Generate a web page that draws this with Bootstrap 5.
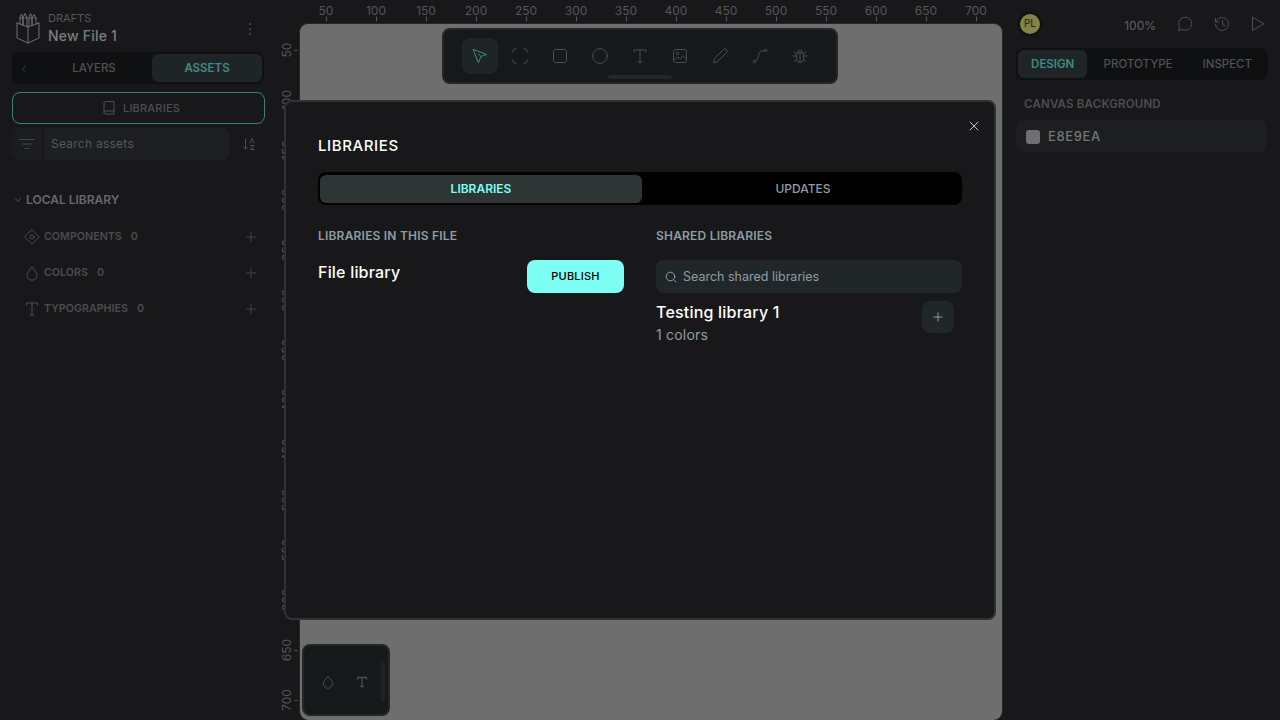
<!DOCTYPE html>
<html lang="en">
  <head>
    <meta charset="UTF-8" />
    <title>New File 1 - Libraries</title>
    <meta name="viewport" content="width=device-width, initial-scale=1" />
    <link href="https://cdn.jsdelivr.net/npm/bootstrap@5.3.0/dist/css/bootstrap.min.css" rel="stylesheet" />
    <style>
      html, body { height: 100%; overflow: hidden; }
      body { background: #18181a; font-family: Inter, "Noto Sans", sans-serif; font-size: 12px; color: #6a6c70; }
      svg { display: block; fill: none; stroke: currentColor; stroke-width: 1; stroke-linecap: round; stroke-linejoin: round; flex: none; }
      .app-shell { width: 1280px; height: 720px; }
      .side-left { width: 276px; flex: none; }
      .side-right { width: 276px; flex: none; padding-left: 12px; padding-right: 12px; }

      .file-head { height: 52px; padding: 12px 16px 0 16px; }
      .file-logo { color: #6c6e72; margin-right: 8px; }
      .file-team { font-size: 11px; line-height: 12px; color: #55575b; }
      .file-name { font-size: 14px; line-height: 16px; margin-top: 4px; color: #7c7e82; font-weight: 500; letter-spacing: .2px; }
      .kebab { color: #4b4d51; stroke-width: 2; margin-left: auto; margin-top: 10px; margin-right: 8px; }

      .seg-tabs { height: 32px; background: #0f1011; border-radius: 8px; padding: 2px; font-size: 11.5px; font-weight: 500; color: #4f5155; }
      .seg-tab { display: flex; align-items: center; justify-content: center; height: 28px; border-radius: 6px; }
      .left-tabs .seg-tab, .right-tabs .seg-tab { padding-top: 2px; }
      .seg-on { background: #1f2526; color: #3f8b83; font-weight: 600; }
      .left-tabs { margin: 0 12px; }
      .back-tab { width: 20px; color: #3b3d40; }
      .layers-tab { width: 118px; padding-left: 2px; }
      .assets-tab { width: 110px; }

      .lib-btn { margin: 8px 11px 0 12px; width: 253px; height: 32px; border: 1px solid #3c8178; border-radius: 8px; padding: 0 0 0 6px; color: #4c4e52; font-weight: 500; font-size: 11px; letter-spacing: .2px; }
      .lib-btn:hover { border-color: #3c8178; color: #4c4e52; }
      .asset-search { margin: 4px 12px 0; height: 32px; }
      .filter-box { width: 30px; height: 32px; background: #1b1c1f; border-radius: 8px 0 0 8px; color: #45474b; margin-right: 2px; }
      .asset-input { width: 186px; height: 32px; background: #1d1f22; border-radius: 0 8px 8px 0; padding-left: 7px; color: #55575b; font-size: 12px; letter-spacing: .25px; }
      .sort-icon { color: #4b4d51; margin-left: 12px; }

      .lib-title { margin: 32px 0 0 14px; height: 16px; font-weight: 600; font-size: 12px; color: #66686c; }
      .lib-title svg { margin-right: 4px; color: #4a4c50; }
      .lib-row { height: 36px; padding: 0 19px 0 24px; font-size: 10.7px; font-weight: 600; color: #4a4c50; }
      .lib-row .row-icon { width: 16px; margin-right: 4px; color: #4a4c50; }
      .lib-row .row-count { margin-left: 9px; }
      .lib-row .row-plus { margin-left: auto; margin-top: -1px; color: #3e4044; }
      .first-row { margin-top: 11px; }

      .center-col { width: 728px; flex: none; }
      .ruler-top { height: 24px; }
      .ruler-left { width: 24px; flex: none; }
      .ruler-txt { font-family: Inter, sans-serif; font-size: 12px; fill: #54565a; stroke: none; text-anchor: middle; }
      .ruler-tick { stroke: #54565a; }
      .canvas-area { position: relative; width: 704px; height: 697px; background: #6e6e6f; border: 1px solid #23282a; border-bottom: 0; border-radius: 9px; margin: -1px 0 0 -1px; }

      .float-bar { position: absolute; background: #17181a; border: 2px solid #23282a; border-radius: 8px; }
      .tool-bar { left: 142px; top: 4px; width: 396px; height: 56px; padding: 8px 16px 0; color: #4b4d51; }
      .tool-btn { width: 40px; height: 36px; display: flex; align-items: center; justify-content: center; border-radius: 8px; }
      .tool-on { background: #1f2526; color: #3f8b83; width: 36px; margin: 0 2px; }
      .bar-grip { position: absolute; left: 164px; bottom: 3px; width: 64px; height: 4px; background: #232527; border-radius: 2px; }
      .palette-bar { left: 2px; top: 620px; width: 88px; height: 72px; color: #4b4d51; padding-left: 16px; gap: 18px; }
      .palette-bar svg { margin-top: 4px; }
      .palette-grip { position: absolute; right: 3px; top: 16px; width: 4px; height: 40px; background: #202224; border-radius: 2px; }

      .top-right { height: 48px; color: #4f5155; }
      .pl-avatar { width: 24px; height: 24px; border-radius: 50%; background: #84844a; border: 2px solid #0f1011; color: #2c2d1c; font-size: 10px; font-weight: 500; margin-left: 2px; margin-top: -1px; }
      .zoom-val { font-size: 12px; color: #5f6165; margin-left: auto; margin-top: 3px; margin-right: 21px; }
      .tr-icon { margin-right: 21px; margin-top: -1px; }
      .tr-icon:last-child { margin-right: 3px; }
      .right-tabs { width: 252px; }
      .proto-tab { width: 102px; }
      .inspect-tab { width: 78px; }
      .design-tab { width: 70px; }
      .bg-label { margin: 16px 0 0 8px; font-weight: 600; font-size: 11.5px; line-height: 16px; color: #4c4e52; letter-spacing: .2px; }
      .bg-row { margin-top: 8px; width: 251px; height: 32px; background: #1c1e20; border-radius: 8px; padding: 1px 0 0 10px; font-size: 13px; color: #747679; font-weight: 500; letter-spacing: .6px; }
      .bg-swatch { width: 14px; height: 14px; background: #6f6f72; border-radius: 3px; margin-right: 8px; }

      .lib-dialog { width: 712px; max-width: 712px; margin: 100px auto 0; }
      .lib-modal { height: 520px; background: #18181a; border: 2px solid #2d3335; border-radius: 8px; padding: 32px; color: #fff; }
      .lib-modal-title { font-size: 15px; line-height: 24px; font-weight: 450; color: #fff; letter-spacing: .6px; margin: 0; }
      .close-x { position: absolute; right: 14px; top: 18px; color: #c4c6c8; background: none; border: 0; padding: 0; }
      .modal-tabs { margin-top: 14px; height: 33px; background: #000; border-radius: 8px; padding: 3px 0 2px 2px; font-size: 12px; font-weight: 500; color: #8f9da3; }
      .modal-tabs .seg-tab { width: 322px; flex: none; }
      .modal-tabs .seg-on { background: #2e3535; color: #7efff5; font-weight: 600; }
      .lib-cols { margin-top: 23px; gap: 32px; }
      .lib-col { width: 306px; }
      .col-head { font-size: 12px; line-height: 16px; font-weight: 600; color: #8f9da3; letter-spacing: .2px; }
      .col-body { margin-top: 16px; }
      .lib-name { font-size: 16px; line-height: 24px; font-weight: 450; color: #fff; letter-spacing: .2px; }
      .publish-btn { width: 97px; height: 33px; background: #7efff5; border: 0; border-radius: 8px; color: #000; font-size: 11px; font-weight: 500; letter-spacing: .2px; padding: 0; }
      .publish-btn:hover { background: #7efff5; color: #000; }
      .shared-search { height: 33px; background: #212729; border-radius: 8px; padding-left: 9px; padding-top: 1px; font-size: 12.5px; color: #8f9da3; }
      .shared-search svg { margin-right: 6px; margin-top: -1px; }
      .shared-item { margin-top: 7px; }
      .shared-count { font-size: 14px; line-height: 21px; color: #8f9da3; letter-spacing: .2px; }
      .add-btn { width: 32px; height: 32px; margin: 1px 8px 0 0; background: #212729; border-radius: 8px; color: #8f9da3; }
    </style>
  </head>
  <body>
    <div class="app-shell d-flex">
      <!-- panel lewy -->
      <aside class="side-left">
        <div class="file-head d-flex">
          <svg class="file-logo" width="24" height="32" viewBox="0 0 24 32">
            <path d="M1 11 12 15 23 11M1 11V26L12 31 23 26V11M12 15V31" />
            <path d="M4 12V5L5.500 2 7 5V13M7 13V6L9 1.500 11 6V14.500M13 14.500V5L14.500 1.500 16 5V13.500M16 13V6L18 2.500 20 6V12" />
            <path d="M4 6H7M9 6H11M13 6H16M18 6H20" />
          </svg>
          <div>
            <div class="file-team">DRAFTS</div>
            <div class="file-name">New File 1</div>
          </div>
          <svg class="kebab" width="4" height="14" viewBox="0 0 4 14">
            <path d="M2 2h.01M2 7h.01M2 12h.01" />
          </svg>
        </div>
        <div class="seg-tabs left-tabs d-flex">
          <div class="seg-tab back-tab">
            <svg width="8" height="10" viewBox="0 0 8 10"><path d="M5.500 2 2.500 5 5.500 8" /></svg>
          </div>
          <div class="seg-tab layers-tab">LAYERS</div>
          <div class="seg-tab seg-on assets-tab">ASSETS</div>
        </div>
        <button type="button" class="btn lib-btn d-flex align-items-center justify-content-center gap-2">
          <svg width="12" height="14" viewBox="0 0 12 14"><path d="M1 11.500V2a1.500 1.500 0 0 1 1.500-1.500H11V13H2.500A1.500 1.500 0 0 1 1 11.500a1.500 1.500 0 0 1 1.500-1.500H11" /></svg>
          LIBRARIES
        </button>
        <div class="asset-search d-flex align-items-center">
          <div class="filter-box d-flex align-items-center justify-content-center">
            <svg width="16" height="12" viewBox="0 0 16 12"><path d="M1 1.500H15M3.500 6H12.500M6 10.500H10" /></svg>
          </div>
          <div class="asset-input d-flex align-items-center">Search assets</div>
          <svg class="sort-icon" width="14" height="14" viewBox="0 0 14 14"><path d="M3.500 2V12M1.500 10 3.500 12 5.500 10M8 6 10 1.500 12 6M8.500 8.500H12L8.500 12.500H12" /></svg>
        </div>
        <div class="lib-title d-flex align-items-center">
          <svg width="8" height="8" viewBox="0 0 8 8"><path d="M1.500 2.500 4 5.500 6.500 2.500" /></svg>
          LOCAL LIBRARY
        </div>
        <div class="lib-row first-row d-flex align-items-center">
          <svg class="row-icon" width="16" height="16" viewBox="0 0 16 16"><path d="M8 .8 15.200 8 8 15.200 .8 8Z" /><circle cx="8" cy="8" r="2" /></svg>
          COMPONENTS <span class="row-count">0</span>
          <svg class="row-plus" width="12" height="12" viewBox="0 0 12 12"><path d="M6 1V11M1 6H11" /></svg>
        </div>
        <div class="lib-row d-flex align-items-center">
          <svg class="row-icon" width="16" height="16" viewBox="0 0 16 16"><path d="M8 1.500 11.800 6.500A5 5 0 1 1 4.200 6.500Z" transform="translate(0 .5)" /></svg>
          COLORS <span class="row-count">0</span>
          <svg class="row-plus" width="12" height="12" viewBox="0 0 12 12"><path d="M6 1V11M1 6H11" /></svg>
        </div>
        <div class="lib-row d-flex align-items-center">
          <svg class="row-icon" width="16" height="16" viewBox="0 0 16 16"><path d="M2.500 4V2H13.500V4M8 2V14M6 14H10" /></svg>
          TYPOGRAPHIES <span class="row-count">0</span>
          <svg class="row-plus" width="12" height="12" viewBox="0 0 12 12"><path d="M6 1V11M1 6H11" /></svg>
        </div>
      </aside>

      <!-- srodek: linijki i plotno -->
      <main class="center-col">
        <svg class="ruler-top" id="rulerTop" width="728" height="24"></svg>
        <div class="d-flex">
          <svg class="ruler-left" id="rulerLeft" width="24" height="696"></svg>
          <div class="canvas-area">
            <div class="float-bar tool-bar d-flex align-items-start">
              <div class="tool-btn tool-on">
                <svg width="18" height="18" viewBox="0 0 18 18"><path d="M2.500 2.500 15.500 7.500 10 9.500 7.500 15.500Z" /><path d="M10 9.500 7.500 7" /></svg>
              </div>
              <div class="tool-btn"><svg width="16" height="16" viewBox="0 0 16 16"><path d="M1 4.500V2.500A1.500 1.500 0 0 1 2.500 1H4.500M11.500 1H13.500A1.500 1.500 0 0 1 15 2.500V4.500M15 11.500V13.500A1.500 1.500 0 0 1 13.500 15H11.500M4.500 15H2.500A1.500 1.500 0 0 1 1 13.500V11.500" /></svg></div>
              <div class="tool-btn"><svg width="14" height="14" viewBox="0 0 14 14"><rect x=".5" y=".5" width="13" height="13" rx="2" /></svg></div>
              <div class="tool-btn"><svg width="16" height="16" viewBox="0 0 16 16"><circle cx="8" cy="8" r="7.300" /></svg></div>
              <div class="tool-btn"><svg width="14" height="14" viewBox="0 0 14 14"><path d="M1 3V1H13V3M7 1V13M5 13H9" /></svg></div>
              <div class="tool-btn"><svg width="14" height="14" viewBox="0 0 14 14"><rect x=".5" y=".5" width="13" height="13" rx="2" /><circle cx="4.500" cy="4.500" r="1.300" /><path d="M1 11 5 8 7.500 10 10 6.500 13.500 10" /></svg></div>
              <div class="tool-btn"><svg width="16" height="16" viewBox="0 0 16 16"><path d="M1.500 14.500 2.500 10.500 11.500 1.500A1.500 1.500 0 0 1 14.500 4.500L5.500 13.500Z" /></svg></div>
              <div class="tool-btn"><svg width="16" height="16" viewBox="0 0 16 16"><circle cx="2.500" cy="13.500" r="1.300" /><circle cx="13.500" cy="2.500" r="1.300" /><path d="M3.500 12.500C6 12 6 9 7 6 7.800 3.500 9.500 2.500 12.200 2.500" /></svg></div>
              <div class="tool-btn"><svg width="16" height="16" viewBox="0 0 16 16"><path d="M4.500 6A1.500 1.500 0 0 1 6 4.500H10A1.500 1.500 0 0 1 11.500 6V11A3.500 3.500 0 0 1 4.500 11ZM8 4.500V14.500M5.500 4.500A2.500 2.500 0 0 1 10.500 4.500M4.500 8H1M11.500 8H15M4.500 6 2 3.500M11.500 6 14 3.500M4.500 11 2 13.500M11.500 11 14 13.500" /></svg></div>
              <div class="bar-grip"></div>
            </div>
            <div class="float-bar palette-bar d-flex align-items-center">
              <svg width="16" height="16" viewBox="0 0 16 16"><path d="M8 2.500 11.500 6.500A4.600 4.600 0 1 1 4.500 6.500Z" /></svg>
              <svg width="16" height="16" viewBox="0 0 16 16"><path d="M3.500 5V3.500H12.500V5M8 3.500V12.500M6.500 12.500H9.500" stroke-width="1.300" /></svg>
              <div class="palette-grip"></div>
            </div>
          </div>
        </div>
      </main>

      <!-- panel prawy -->
      <aside class="side-right">
        <div class="top-right d-flex align-items-center">
          <div class="pl-avatar d-flex align-items-center justify-content-center">PL</div>
          <div class="zoom-val">100%</div>
          <svg class="tr-icon" width="16" height="16" viewBox="0 0 16 16"><path d="M1.500 14.500 2.600 11A6.500 6.500 0 1 1 5 13.400Z" /></svg>
          <svg class="tr-icon" width="16" height="16" viewBox="0 0 16 16"><path d="M1.500 2.500V6H5M1.800 6A6.500 6.500 0 1 1 1.500 8.500M8.500 4.500V8.500L11 10" /></svg>
          <svg class="tr-icon" width="14" height="16" viewBox="0 0 14 16"><path d="M1.500 1.500V14.500L12.500 8Z" /></svg>
        </div>
        <div class="seg-tabs right-tabs d-flex">
          <div class="seg-tab seg-on design-tab">DESIGN</div>
          <div class="seg-tab proto-tab">PROTOTYPE</div>
          <div class="seg-tab inspect-tab">INSPECT</div>
        </div>
        <div class="bg-label">CANVAS BACKGROUND</div>
        <div class="bg-row d-flex align-items-center">
          <span class="bg-swatch"></span>E8E9EA
        </div>
      </aside>
    </div>

    <!-- okno bibliotek -->
    <div class="modal d-block" tabindex="-1">
      <div class="modal-dialog lib-dialog">
        <div class="modal-content lib-modal">
          <button type="button" class="close-x" aria-label="Close">
            <svg width="12" height="12" viewBox="0 0 12 12"><path d="M2 2 10 10M10 2 2 10" /></svg>
          </button>
          <h2 class="lib-modal-title">LIBRARIES</h2>
          <div class="seg-tabs modal-tabs d-flex">
            <div class="seg-tab seg-on">LIBRARIES</div>
            <div class="seg-tab">UPDATES</div>
          </div>
          <div class="lib-cols d-flex">
            <div class="lib-col">
              <div class="col-head">LIBRARIES IN THIS FILE</div>
              <div class="col-body d-flex justify-content-between align-items-start">
                <div class="lib-name">File library</div>
                <button type="button" class="btn publish-btn">PUBLISH</button>
              </div>
            </div>
            <div class="lib-col">
              <div class="col-head">SHARED LIBRARIES</div>
              <div class="col-body">
                <div class="shared-search d-flex align-items-center">
                  <svg width="12" height="12" viewBox="0 0 12 12"><circle cx="5.500" cy="5.500" r="4.300" /><path d="M8.700 8.700 11 11" /></svg>
                  Search shared libraries
                </div>
                <div class="shared-item d-flex justify-content-between align-items-start">
                  <div>
                    <div class="lib-name">Testing library 1</div>
                    <div class="shared-count">1 colors</div>
                  </div>
                  <div class="add-btn d-flex align-items-center justify-content-center">
                    <svg width="10" height="10" viewBox="0 0 10 10"><path d="M5 1V9M1 5H9" /></svg>
                  </div>
                </div>
              </div>
            </div>
          </div>
        </div>
      </div>
    </div>

    <script src="https://cdn.jsdelivr.net/npm/bootstrap@5.3.0/dist/js/bootstrap.bundle.min.js"></script>
    <script>
      // podzialki linijek, co 50 jednostek
      let top_ = "";
      for (let v = 50; v <= 700; v += 50) {
        top_ += `<text class="ruler-txt" x="${v}" y="14.500">${v}</text><path class="ruler-tick" d="M${v + 0.5} 17V21" />`;
      }
      document.getElementById("rulerTop").innerHTML = top_;
      let left_ = "";
      for (let v = 50; v <= 700; v += 50) {
        const y = v - 24;
        left_ += `<text class="ruler-txt" transform="translate(15 ${y}) rotate(-90)">${v}</text><path class="ruler-tick" d="M19 ${y + 0.5}H21" />`;
      }
      document.getElementById("rulerLeft").innerHTML = left_;
    </script>
  </body>
</html>
